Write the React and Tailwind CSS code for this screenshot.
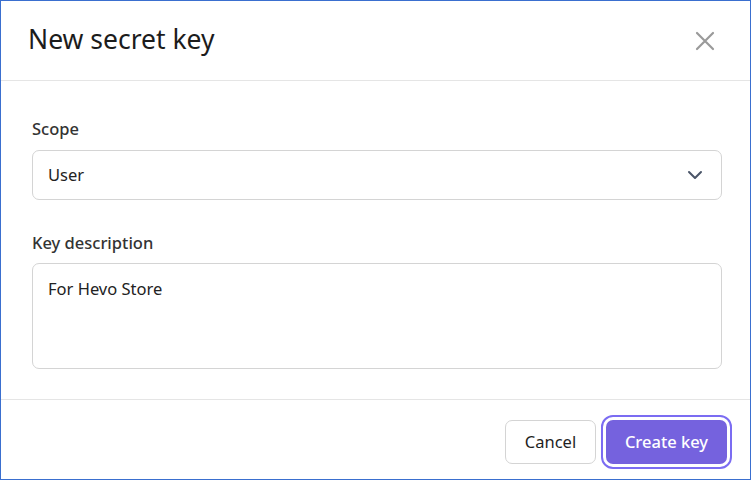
import React from "react";

export default function App() {
  return (
    <div className="w-[751px] h-[480px] box-border border border-[#3a6fcf] bg-white flex flex-col font-['Noto_Sans',sans-serif] text-[#1f1f1f]">
      <div className="h-[80px] shrink-0 border-b border-[#e5e5e5] flex items-center justify-between pl-[27px] pr-[35px]">
        <h1 className="text-[26.5px] leading-none text-[#1c1c1c] font-normal -mt-[2px]">New secret key</h1>
        <button className="w-[20px] h-[20px] flex items-center justify-center text-[#9a9a9a]">
          <svg width="20" height="20" viewBox="0 0 20 20" fill="none" stroke="currentColor" strokeWidth="2.2" strokeLinecap="round">
            <path d="M2 2L18 18M18 2L2 18" />
          </svg>
        </button>
      </div>
      <div className="flex-1 pl-[31px] pr-[28px] pt-[36px] flex flex-col">
        <label className="text-[16.5px] leading-6 text-[#333] font-medium">Scope</label>
        <div className="mt-[9px] h-[50px] border border-[#d4d4d4] rounded-[7px] flex items-center justify-between pl-[15px] pr-[18px]">
          <span className="text-[16.5px] text-[#222]">User</span>
          <svg width="16" height="10" viewBox="0 0 16 10" fill="none" stroke="#4a5568" strokeWidth="2" strokeLinecap="round" strokeLinejoin="round">
            <path d="M2 2L8 8L14 2" />
          </svg>
        </div>
        <label className="mt-[31px] text-[16.5px] leading-6 text-[#333] font-medium">Key description</label>
        <div className="mt-[8px] h-[106px] border border-[#d4d4d4] rounded-[7px] pl-[15px] pt-[13px]">
          <span className="text-[16.5px] text-[#222]">For Hevo Store</span>
        </div>
      </div>
      <div className="h-[80px] shrink-0 border-t border-[#e5e5e5] flex items-center justify-end pr-[23px] pt-[5px] gap-[10px]">
        <button className="h-[44px] w-[91px] border border-[#d4d4d4] rounded-[7px] bg-white text-[16.5px] text-[#1f1f1f]">Cancel</button>
        <button className="h-[44px] w-[121px] rounded-[7px] bg-[#7562de] text-white text-[16.5px] font-medium outline-2 outline-offset-[3px] outline-[#7b6cf2]">Create key</button>
      </div>
    </div>
  );
}
